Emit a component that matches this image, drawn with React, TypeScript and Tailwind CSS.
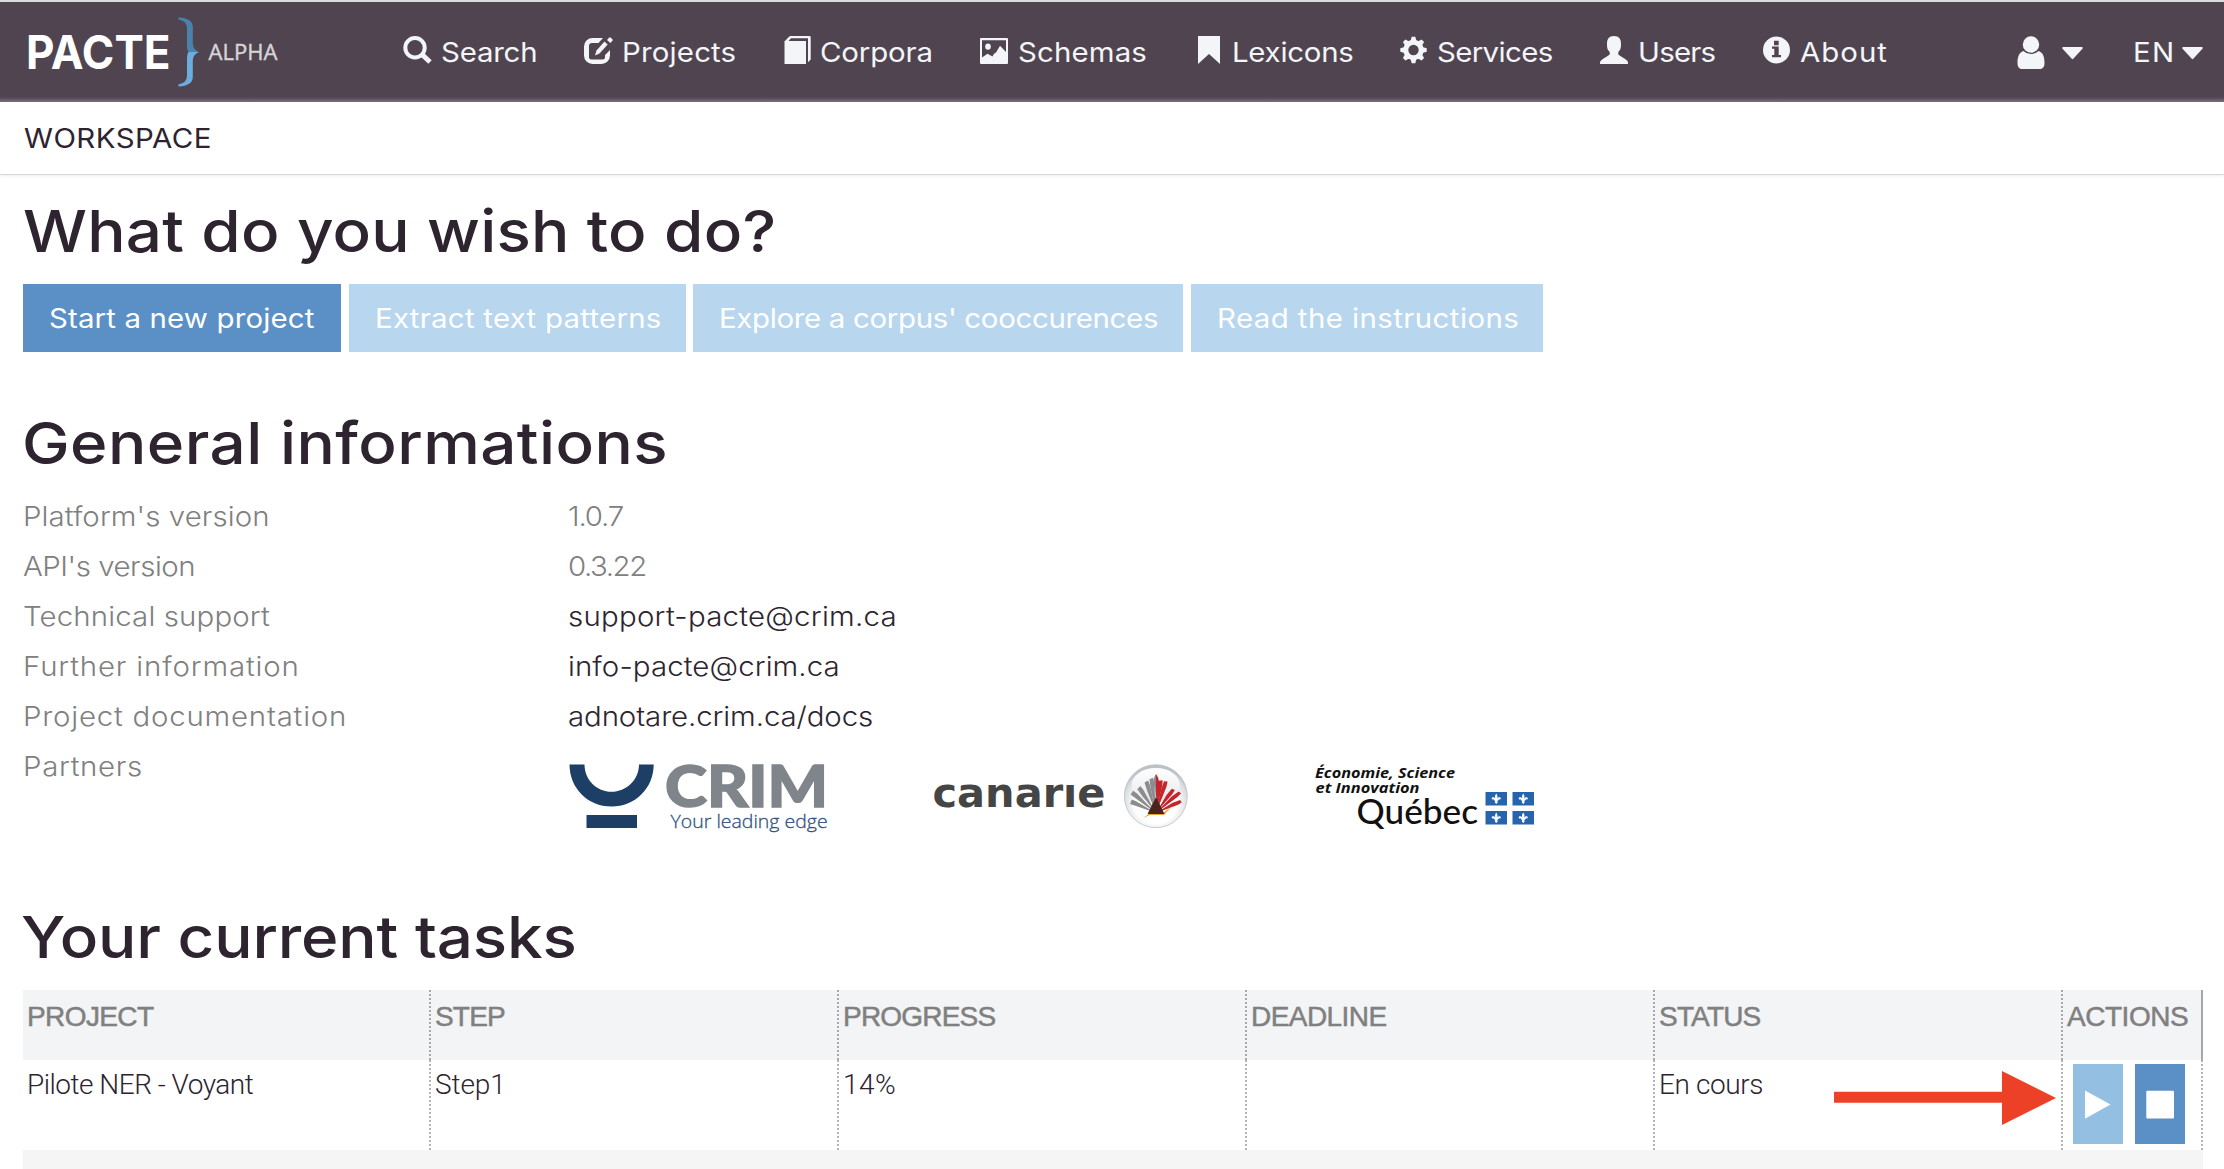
import React from "react";

const stretch = "inline-block origin-left translate-y-px scale-x-[1.09] whitespace-nowrap font-[Inter,sans-serif] text-[27px]";

function SearchIcon() {
  return (
    <svg className="h-9 w-[30px]" viewBox="0 0 30 36" fill="none" stroke="currentColor">
      <circle cx="12" cy="13.7" r="9.7" strokeWidth="4" />
      <path d="M19 20.5l8 7.5" strokeWidth="5" />
    </svg>
  );
}
function EditIcon() {
  return (
    <svg className="h-9 w-[30px]" viewBox="0 0 30 36" fill="currentColor">
      <path d="M19 4H8.5A8.5 8.5 0 0 0 0 12.500V21.500A8.500 8.500 0 0 0 8.500 30H17.500A8.500 8.500 0 0 0 26 21.500V16L21 21V23A2.500 2.500 0 0 1 18.500 25.500H7.500A2.500 2.500 0 0 1 5 23V12A3 3 0 0 1 8 9H14.500Z" />
      <path d="M11 21.500L12.500 16.500L20.500 7.500L23.700 10.500L15.500 19.500Z" />
      <path d="M23 6L25.300 3.500Q26 3 26.800 3.700L28.600 5.500Q29 6 28.500 6.700L26.300 9Z" />
    </svg>
  );
}
function BookIcon() {
  return (
    <svg className="h-9 w-[28px]" viewBox="0 0 28 36" fill="currentColor">
      <path d="M.5 7H22V30H.5Z" />
      <path d="M.5 7.500L5 2.700Q5.700 2 7 2H25.500Q26.700 2 26.700 3.200V25.500L24 28.200V4.300H7L4.300 7.200Z" />
    </svg>
  );
}
function PictureIcon() {
  return (
    <svg className="h-9 w-[28px]" viewBox="0 0 28 36" fill="currentColor">
      <path fillRule="evenodd" d="M1 4H27Q28 4 28 5V29Q28 30 27 30H1Q0 30 0 29V5Q0 4 1 4ZM2 6.200V23.500L7.500 19.700L12.500 22.500L14 19.800L16 18.500L20 11.800L26 18V6.200Z" />
      <ellipse cx="8" cy="12.600" rx="2.800" ry="3.200" />
    </svg>
  );
}
function BookmarkIcon() {
  return (
    <svg className="h-9 w-[22px]" viewBox="0 0 22 36" fill="currentColor">
      <path d="M0 2H22V30L11 20L0 30Z" />
    </svg>
  );
}
function CogIcon() {
  return (
    <svg className="h-9 w-[27px]" viewBox="0 0 27 36" fill="currentColor">
      <circle cx="13.500" cy="16" r="7.700" fill="none" stroke="currentColor" strokeWidth="5" />
      {[0, 45, 90, 135, 180, 225, 270, 315].map((a) => (
        <path key={a} d="M10.300 8L11.700 2.800H15.300L16.700 8Z" transform={`rotate(${a} 13.5 16)`} />
      ))}
    </svg>
  );
}
function PersonIcon() {
  return (
    <svg className="h-9 w-[28px]" viewBox="0 0 28 36" fill="currentColor">
      <path d="M14 2C9 2 7 5 7 9.500C7 14 7.300 15.500 9.700 18V20.500C8 22 3.500 24 1 26.500C0 27.500 0 28.500 0 30H28C28 28.500 28 27.500 27 26.500C24.500 24 20 22 18.300 20.500V18C20.700 15.500 21 14 21 9.500C21 5 19 2 14 2Z" />
    </svg>
  );
}
function InfoIcon() {
  return (
    <svg className="h-9 w-[27px]" viewBox="0 0 27 36" fill="currentColor">
      <path fillRule="evenodd" d="M13.500 2.500A13.500 13.500 0 1 0 13.500 29.500A13.500 13.500 0 1 0 13.500 2.500ZM11 6.700H15.700V11.200H11ZM9 12.500H15.700V21H18V23.200H9V21H11.300V14.700H9Z" />
    </svg>
  );
}
function AccountIcon() {
  return (
    <svg className="h-9 w-[28px]" viewBox="0 0 28 36" fill="currentColor">
      <ellipse cx="14" cy="10.500" rx="8.200" ry="8.200" />
      <path d="M6.300 17Q9.500 20 14 20Q18.500 20 21.700 17C26 18.500 27.500 23 27.500 29C27.500 32.500 26 35 23 35H5C2 35 .5 32.500 .5 29C.5 23 2 18.500 6.300 17Z" />
    </svg>
  );
}
function Caret() {
  return (
    <svg className="h-9 w-[21px] shrink-0" viewBox="0 0 21 36" fill="currentColor">
      <path d="M1.200 13H19.800Q21.500 13.500 20.200 15L11.500 24.600Q10.500 25.700 9.500 24.600L.8 15Q-.5 13.500 1.200 13Z" />
    </svg>
  );
}

const navItems = [
  { label: "Search", Icon: SearchIcon, item: "w-[181px]", icon: "w-[37.5px]", text: "tracking-[-0.2px]" },
  { label: "Projects", Icon: EditIcon, item: "w-[200px]", icon: "w-[37.5px]", text: "tracking-[0.15px]" },
  { label: "Corpora", Icon: BookIcon, item: "w-[196px]", icon: "w-[36px]", text: "tracking-[-0.15px]" },
  { label: "Schemas", Icon: PictureIcon, item: "w-[218px]", icon: "w-[38px]", text: "tracking-[0.12px]" },
  { label: "Lexicons", Icon: BookmarkIcon, item: "w-[202px]", icon: "w-[34px]", text: "tracking-[-0.25px]" },
  { label: "Services", Icon: CogIcon, item: "w-[200px]", icon: "w-[37px]", text: "tracking-[-0.6px]" },
  { label: "Users", Icon: PersonIcon, item: "w-[163px]", icon: "w-[38px]", text: "tracking-[-0.7px]" },
  { label: "About", Icon: InfoIcon, item: "w-[254px]", icon: "w-[37px]", text: "tracking-[0.9px]" },
];

const actions = [
  { label: "Start a new project", cls: "w-[318px] bg-[#5b90c7]", text: "tracking-[0.13px]" },
  { label: "Extract text patterns", cls: "ml-2 w-[337px] bg-[#b8d6ee]", text: "tracking-[0.23px]" },
  { label: "Explore a corpus' cooccurences", cls: "ml-[7px] w-[490px] bg-[#b8d6ee]", text: "tracking-[-0.31px]" },
  { label: "Read the instructions", cls: "ml-2 w-[352px] bg-[#b8d6ee]", text: "tracking-[0.38px]" },
];

const infos = [
  { k: "Platform's version", kt: "tracking-[0.06px]", v: "1.0.7", vt: "tracking-[-1.07px] text-[#808080]" },
  { k: "API's version", kt: "tracking-[-0.44px]", v: "0.3.22", vt: "tracking-[-1.35px] text-[#808080]" },
  { k: "Technical support", kt: "tracking-[0.12px]", v: "support-pacte@crim.ca", vt: "tracking-[0.22px] text-[#2d2430]" },
  { k: "Further information", kt: "tracking-[0.76px]", v: "info-pacte@crim.ca", vt: "tracking-[0.08px] text-[#2d2430]" },
  { k: "Project documentation", kt: "tracking-[0.7px]", v: "adnotare.crim.ca/docs", vt: "tracking-[-0.1px] text-[#2d2430]" },
];

const headers = [
  { label: "PROJECT", cls: "tracking-[-0.6px] border-dotted" },
  { label: "STEP", cls: "tracking-[-0.82px] border-dotted" },
  { label: "PROGRESS", cls: "tracking-[-0.8px] border-dotted" },
  { label: "DEADLINE", cls: "tracking-[-0.55px] border-dotted" },
  { label: "STATUS", cls: "tracking-[-0.8px] border-dotted" },
  { label: "ACTIONS", cls: "tracking-[-0.46px] border-solid" },
];

function PacteLogo() {
  return (
    <svg className="h-[98px] w-[380px] shrink-0" viewBox="23 3 380 98">
      <text x="26" y="68.800" fontSize="46.500" fontWeight="750" fill="#fff" className="font-[Inter,sans-serif]" textLength="144.500" lengthAdjust="spacingAndGlyphs">PACTE</text>
      <path fill="#4b82ac" d="M178.500 17.500C188 18 192.800 21 192.800 27V42C192.800 48 195 50 199 52H188.500C187 50 187 47 187 44V29C187 23 184 20.500 178.500 19.800Z" />
      <path fill="#6badde" d="M178.500 86.500C188 86 192.800 83 192.800 77V62C192.800 56 195 54 199 52H188.500C187 54 187 57 187 60V75C187 81 184 83.500 178.500 84.200Z" />
      <text x="208.500" y="59.600" fontSize="22" fill="#d8d5d9" stroke="#d8d5d9" strokeWidth="0.4" className="font-['Open_Sans',sans-serif]" textLength="69" lengthAdjust="spacingAndGlyphs">ALPHA</text>
    </svg>
  );
}

function CrimLogo() {
  return (
    <svg className="h-[100px] w-[362px]" viewBox="568 741 362 100">
      <path fill="#1d3f66" d="M569.500 764.500H584.500C584.500 780 597 791.800 611.500 791.800C626 791.800 639 780 639 764.500H653.700C653.700 788 635.500 806.500 611.500 806.500C587.500 806.500 569.500 788 569.500 764.500Z" />
      <path fill="#1d3f66" d="M586.500 815H637V828H586.500Z" />
      <text x="665" y="806.500" fontSize="58" fontWeight="900" fill="#7f858b" stroke="#7f858b" strokeWidth="1.500" className="font-[Lato,sans-serif]" textLength="163" lengthAdjust="spacingAndGlyphs">CRIM</text>
      <text x="670.600" y="828" fontSize="19" fill="#2f527e" stroke="#2f527e" strokeWidth="0.300" className="font-['Open_Sans',sans-serif]" textLength="157" lengthAdjust="spacingAndGlyphs">Your leading edge</text>
    </svg>
  );
}

function CanarieLogo() {
  const left = [[1132, 792], [1131, 801], [1139, 787], [1146.500, 781], [1151.500, 778]];
  const right = [[1180, 792], [1181, 801], [1173.500, 789], [1166, 781], [1161, 780]];
  const blade = ([x, y]: number[]) => {
    const dx = x - 1156, dy = y - 813, n = Math.hypot(dx, dy), px = (-dy / n) * 2.1, py = (dx / n) * 2.1;
    return `M1156 813L${x - dx * 0.15 + px} ${y - dy * 0.15 + py}L${x + px * 0.8} ${y + py * 0.8}L${x - px} ${y - py + 1}L${x - dx * 0.3 - px} ${y - dy * 0.3 - py}Z`;
  };
  return (
    <svg className="h-[100px] w-[380px]" viewBox="930 741 380 100">
      <defs>
        <clipPath id="wordmark"><path d="M930 782.500H1110V812H930Z" /></clipPath>
        <radialGradient id="orb" cx="0.5" cy="0.6" r="0.56">
          <stop offset="0.6" stopColor="#ffffff" />
          <stop offset="0.9" stopColor="#d9dce0" />
          <stop offset="1" stopColor="#bcc1c7" />
        </radialGradient>
        <linearGradient id="gloss" x1="0" y1="0" x2="0" y2="1">
          <stop offset="0" stopColor="#ffffff" />
          <stop offset="1" stopColor="#e6e8eb" />
        </linearGradient>
      </defs>
      <text x="932.500" y="806.500" fontSize="40.500" fontWeight="700" fill="#454545" clipPath="url(#wordmark)" className="font-['DejaVu_Sans',sans-serif]" textLength="173" lengthAdjust="spacingAndGlyphs">canarie</text>
      <circle cx="1155.800" cy="796.200" r="31.500" fill="url(#orb)" stroke="#bcc1c7" strokeWidth="0.800" />
      <ellipse cx="1155.800" cy="785" rx="24" ry="17" fill="url(#gloss)" />
      <g fill="#8c8c8e">{left.map((p, i) => <path key={i} d={blade(p)} />)}</g>
      <g fill="#c4252b">{right.map((p, i) => <path key={i} d={blade(p)} />)}</g>
      <path fill="#8c8c8e" d="M1156 774C1153 778 1153 784 1155 789L1156 800Z" />
      <path fill="#c4252b" d="M1156 774C1159 778 1160 784 1158.500 790L1156 800Z" />
      <path fill="#e9a23a" d="M1143 818L1150 813H1163L1172 806L1164 815H1150Z" />
      <path fill="#4a231d" d="M1156 797L1164.500 814H1147.500Z" />
    </svg>
  );
}

function QuebecLogo() {
  return (
    <svg className="h-[100px] w-[240px]" viewBox="1310 741 240 100">
      <g fontSize="14" fontWeight="700" fontStyle="italic" fill="#111" className="font-['Open_Sans',sans-serif]">
        <text x="1315" y="777.600" textLength="140" lengthAdjust="spacingAndGlyphs">Économie, Science</text>
        <text x="1315.500" y="792.800" textLength="104" lengthAdjust="spacingAndGlyphs">et Innovation</text>
      </g>
      <text x="1356.500" y="824.300" fontSize="34.500" fontWeight="500" fill="#111" className="font-[Lato,sans-serif]" textLength="121.500" lengthAdjust="spacingAndGlyphs">Québec</text>
      {[[1485.500, 792], [1512.500, 792], [1485.500, 811], [1512.500, 811]].map(([x, y]) => (
        <g key={`${x}-${y}`} transform={`translate(${x} ${y})`}>
          <path fill="#2764ae" d="M0 0H21.500V13.500H0Z" />
          <path fill="#fff" d="M10.750 1.500C12.200 3.500 12.200 5 11.600 6.700C12.700 4.800 15.300 4.800 15.300 6.500C15.300 7.600 14.200 7.800 13.700 7.300C13.100 7.600 12.700 8 12.500 8.700H11.700L12.200 10.500L10.750 12L9.300 10.500L9.800 8.700H9C8.800 8 8.400 7.600 7.800 7.300C7.300 7.800 6.200 7.600 6.200 6.500C6.200 4.800 8.800 4.800 9.900 6.700C9.300 5 9.300 3.500 10.750 1.500Z" />
        </g>
      ))}
    </svg>
  );
}

function Heading({ children, className }: { children: string; className: string }) {
  return (
    <h2 className={`h-[70px] font-[Inter,sans-serif] text-[58px] leading-[70px] font-medium text-[#2d2430] ${className}`}>
      <span className="inline-block origin-left scale-x-[1.1] whitespace-nowrap">{children}</span>
    </h2>
  );
}

const cell = "border-r-2 border-dotted border-[#b4b4b4] pl-1";

export default function App() {
  return (
    <div className="h-[1169px] w-[2224px] overflow-hidden bg-white">
      <header className="flex h-[102px] items-center border-t-2 border-[#dcdbdf] bg-[linear-gradient(to_bottom,#4f444f_94px,#554b55_96px,#7b747b_100px)] pl-[23px] text-[#f3f5f8]">
        <PacteLogo />
        <nav className="flex">
          {navItems.map(({ label, Icon, item, icon, text }) => (
            <a key={label} className={`flex h-9 items-center ${item}`}>
              <span className={`shrink-0 ${icon}`}><Icon /></span>
              <span className={`${stretch} ${text}`}>{label}</span>
            </a>
          ))}
        </nav>
        <div className="flex h-9 w-[116px] items-center gap-[17px]">
          <AccountIcon />
          <Caret />
        </div>
        <div className="flex h-9 items-center">
          <span className={`w-[49px] ${stretch} tracking-[1.2px]`}>EN</span>
          <Caret />
        </div>
      </header>

      <div className="flex h-[73px] items-center border-b border-[#d6d8d9] pl-[23.5px] text-[#2d2430] shadow-[0_1px_3px_rgba(0,0,0,0.08)]">
        <span className={`${stretch} tracking-[0.39px]`}>WORKSPACE</span>
      </div>

      <main className="pl-[23px]">
        <Heading className="mt-[21px] tracking-[0.18px]">What do you wish to do?</Heading>
        <div className="mt-[18px] flex">
          {actions.map((a) => (
            <button key={a.label} className={`flex h-[68px] items-center pl-[25.5px] text-white ${a.cls}`}>
              <span className={`${stretch} ${a.text}`}>{a.label}</span>
            </button>
          ))}
        </div>

        <Heading className="mt-[56px] -ml-px tracking-[0.38px]">General informations</Heading>
        <div className="mt-[13px] font-light text-[#808080]">
          {infos.map((r) => (
            <div key={r.k} className="flex h-[50px] items-center">
              <div className="w-[544.5px]"><span className={`${stretch} ${r.kt}`}>{r.k}</span></div>
              <span className={`${stretch} ${r.vt}`}>{r.v}</span>
            </div>
          ))}
          <div className="flex h-[161px]">
            <div className="flex h-[50px] w-[545px] items-center"><span className={`${stretch} tracking-[0.6px]`}>Partners</span></div>
            <CrimLogo />
            <CanarieLogo />
            <QuebecLogo />
          </div>
        </div>

        <Heading className="-ml-[2px] tracking-[-0.16px]">Your current tasks</Heading>
        <div className="mt-[18px] w-[2180px]">
          <div className="grid h-[70px] grid-cols-[408px_408px_408px_408px_408px_140px] bg-[#f3f4f6] font-['Liberation_Sans',sans-serif] text-[28px] leading-[54px] text-[#808080]">
            {headers.map((h) => (
              <div key={h.label} className={`border-r-2 border-[#a8a8a8] pl-1 ${h.cls}`}>
                <span className="[-webkit-text-stroke:0.5px_#808080]">{h.label}</span>
              </div>
            ))}
          </div>
          <div className="grid h-[90px] grid-cols-[408px_408px_408px_408px_408px_140px] font-[Roboto,sans-serif] text-[28px] leading-[50px] font-light text-[#2d2430]">
            <div className={`${cell} tracking-[-0.5px]`}>Pilote NER - Voyant</div>
            <div className={`${cell} tracking-[-0.1px]`}>Step1</div>
            <div className={`${cell} tracking-[0.47px]`}>14%</div>
            <div className={cell} />
            <div className={`${cell} relative tracking-[-0.4px]`}>
              En cours
              <svg className="absolute top-[11px] right-[5px] h-[54px] w-[222px]" viewBox="0 0 222 54" fill="#ec4027">
                <path d="M0 20.700H168V0L222 27L168 54V31.700H0Z" />
              </svg>
            </div>
            <div className="flex gap-3 border-r-2 border-dotted border-[#b4b4b4] pt-1 pl-[10px]">
              <button className="h-20 w-[50px] bg-[#92bfe2]">
                <svg className="h-20 w-[50px]" viewBox="0 0 50 80" fill="#fff"><path d="M12 26.500L37.500 40.500L12 54.800Z" /></svg>
              </button>
              <button className="h-20 w-[50px] bg-[#5b90c7]">
                <svg className="h-20 w-[50px]" viewBox="0 0 50 80" fill="#fff"><rect x="11.300" y="26.700" width="27.700" height="27.800" rx="1" /></svg>
              </button>
            </div>
          </div>
          <div className="h-[19px] bg-[#f5f5f5]" />
        </div>
      </main>
    </div>
  );
}
